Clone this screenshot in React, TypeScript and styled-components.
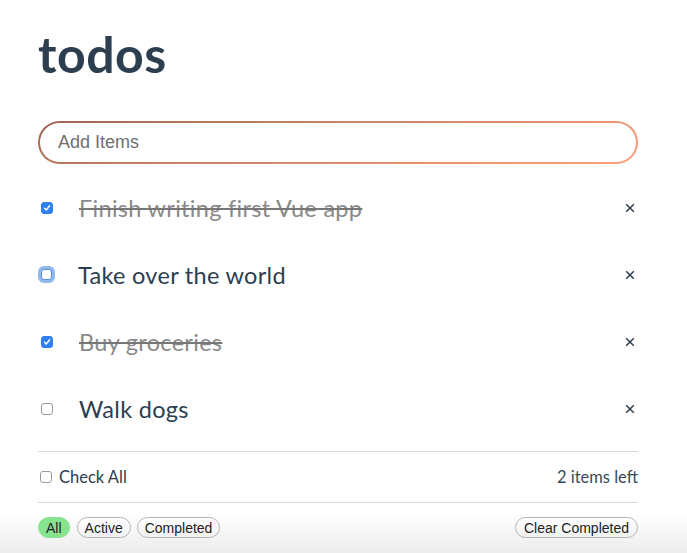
import React from "react";
import styled, { createGlobalStyle, css } from "styled-components";

const Global = createGlobalStyle`
  html, body { margin: 0; padding: 0; background: #fff; }
  body { font-family: Lato, "Noto Sans", sans-serif; color: #2c3e50; }
`;

const Page = styled.div`
  width: 687px;
  height: 553px;
  overflow: hidden;
  position: relative;
  background: #fff;
`;

const Container = styled.div`
  width: 600px;
  margin-left: 38px;
  display: flex;
  flex-direction: column;
`;

const Title = styled.h1`
  margin: 24px 0 0 0;
  font-size: 50px;
  line-height: 60px;
  font-weight: 700;
  color: #2c3e50;
  letter-spacing: 0.5px;
`;

const InputWrap = styled.div`
  margin-top: 37px;
  height: 43px;
  border-radius: 22px;
  padding: 2px;
  background: linear-gradient(165deg, #9e6553 0%, #c98467 40%, #ff9f7c 100%);
  box-sizing: border-box;
  display: flex;
`;

const Input = styled.input`
  flex: 1;
  border: none;
  outline: none;
  border-radius: 20px;
  background: #fff;
  padding: 0 0 0 18px;
  font-family: "Liberation Sans", Arial, sans-serif;
  font-size: 18px;
  color: #333;
  &::placeholder { color: #6f6f6f; }
`;

const List = styled.ul`
  list-style: none;
  margin: 10px 0 0 0;
  padding: 0;
`;

const Row = styled.li`
  height: 67px;
  display: flex;
  align-items: center;
`;

const Box = styled.span<{ $checked?: boolean; $focus?: boolean }>`
  width: 12px;
  height: 12px;
  box-sizing: border-box;
  border-radius: 3px;
  margin-left: 3px;
  flex: none;
  display: flex;
  align-items: center;
  justify-content: center;
  border: 1px solid #9a9a9a;
  background: #fff;
  ${(p) =>
    p.$checked &&
    css`
      background: #2f80f0;
      border-color: #2f80f0;
    `}
  ${(p) =>
    p.$focus &&
    css`
      border-color: #5b8fd6;
      border-width: 1.5px;
      box-shadow: 0 0 0 3px rgba(110, 160, 230, 0.75);
      width: 11px;
      height: 11px;
    `}
`;

const ItemText = styled.span<{ $done?: boolean }>`
  margin-left: 26px;
  font-size: 23.5px;
  letter-spacing: 0.3px;
  flex: 1;
  color: ${(p) => (p.$done ? "#8a8a8a" : "#2c3e50")};
  text-decoration: ${(p) => (p.$done ? "line-through" : "none")};
  text-decoration-thickness: 2px;
  text-decoration-color: #777;
`;

const Remove = styled.span`
  width: 10px;
  height: 10px;
  margin-right: 3px;
  display: flex;
`;

const Divider = styled.div<{ $top?: number }>`
  height: 1px;
  background: #d8d8d8;
  margin-top: ${(p) => p.$top ?? 0}px;
`;

const FooterRow = styled.div`
  height: 50px;
  display: flex;
  align-items: center;
  justify-content: space-between;
  font-size: 16.5px;
  color: #2c3e50;
`;

const CheckAll = styled.label`
  display: flex;
  align-items: center;
  gap: 7px;
  margin-left: -1px;
`;

const Left = styled.span`
  color: #3a4a5a;
`;

const Filters = styled.div`
  position: absolute;
  left: 0;
  right: 0;
  bottom: 0;
  height: 50px;
  background: linear-gradient(#ffffff 0%, #ffffff 20%, #ececec 100%);
`;

const FilterInner = styled.div`
  width: 600px;
  margin-left: 38px;
  padding-top: 14px;
  display: flex;
  align-items: center;
  gap: 6px;
`;

const Btn = styled.button<{ $active?: boolean; $push?: boolean }>`
  height: 21px;
  padding: 0 7px;
  border-radius: 11px;
  border: 1px solid #b4b4b4;
  font-family: "Liberation Sans", Arial, sans-serif;
  font-size: 14px;
  color: #222;
  background: linear-gradient(#ffffff, #f1f1f1);
  ${(p) =>
    p.$active &&
    css`
      background: #86e38f;
      border-color: #86e38f;
      margin-right: 1px;
    `}
  ${(p) => p.$push && css`margin-left: auto; padding: 0 8px;`}
`;

const Check = () => (
  <svg width="8" height="8" viewBox="0 0 8 8">
    <path d="M1.5 4.2 L3.3 6 L6.6 1.8" fill="none" stroke="#fff" strokeWidth="1.4" strokeLinecap="round" strokeLinejoin="round" />
  </svg>
);

const X = () => (
  <svg width="10" height="10" viewBox="0 0 10 10">
    <path d="M1.2 1.2 L8.8 8.8 M8.8 1.2 L1.2 8.8" stroke="#2c3e50" strokeWidth="1.5" />
  </svg>
);

const todos = [
  { text: "Finish writing first Vue app", done: true },
  { text: "Take over the world", done: false, focus: true },
  { text: "Buy groceries", done: true },
  { text: "Walk dogs", done: false },
];

export default function App() {
  return (
    <Page>
      <Global />
      <Container>
        <Title>todos</Title>
        <InputWrap>
          <Input placeholder="Add Items" />
        </InputWrap>
        <List>
          {todos.map((t) => (
            <Row key={t.text}>
              <Box $checked={t.done} $focus={t.focus}>
                {t.done && <Check />}
              </Box>
              <ItemText $done={t.done}>{t.text}</ItemText>
              <Remove>
                <X />
              </Remove>
            </Row>
          ))}
        </List>
        <Divider $top={9} />
        <FooterRow>
          <CheckAll>
            <Box />
            Check All
          </CheckAll>
          <Left>2 items left</Left>
        </FooterRow>
        <Divider />
      </Container>
      <Filters>
        <FilterInner>
          <Btn $active>All</Btn>
          <Btn>Active</Btn>
          <Btn>Completed</Btn>
          <Btn $push>Clear Completed</Btn>
        </FilterInner>
      </Filters>
    </Page>
  );
}
